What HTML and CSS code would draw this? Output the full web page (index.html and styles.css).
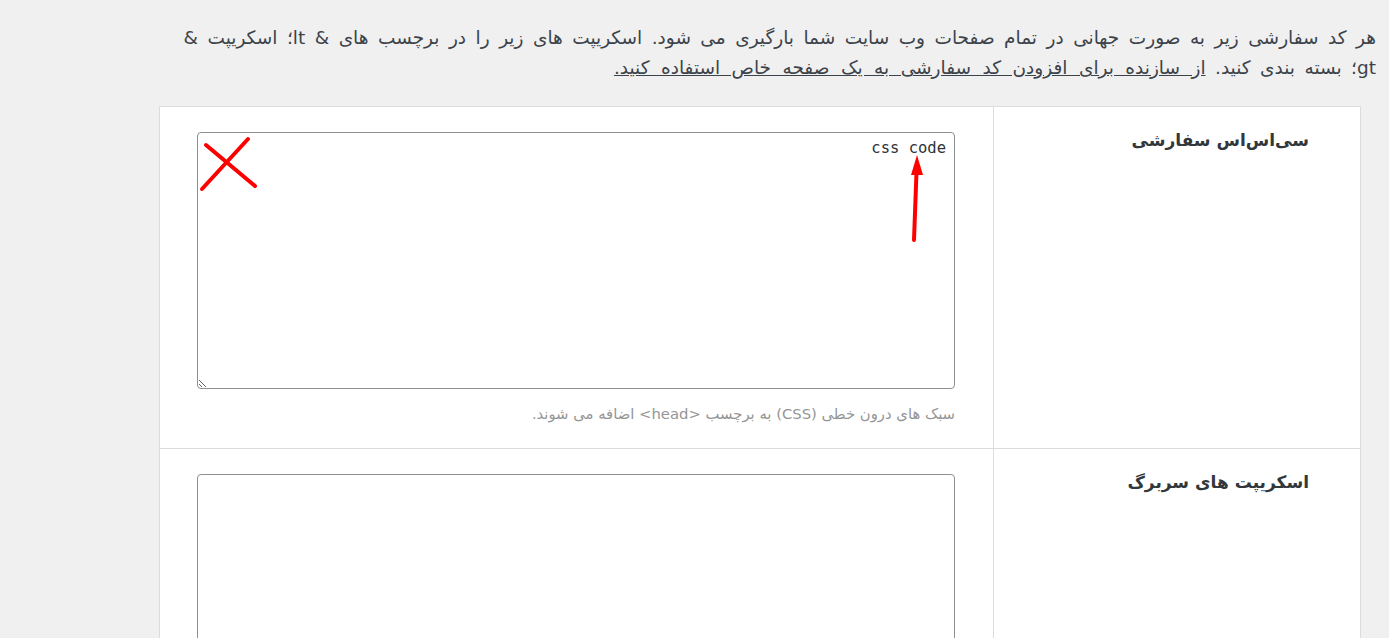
FILE: index.html
```html
<!DOCTYPE html>
<html lang="fa" dir="rtl">
<head>
  <meta charset="UTF-8">
  <meta name="viewport" content="width=device-width, initial-scale=1.0">
  <title>کدهای سفارشی</title>
  <link rel="stylesheet" href="styles.css">
</head>
<body>
  <main class="wrap">
    <p class="intro">
      هر کد سفارشی زیر به صورت جهانی در تمام صفحات وب سایت شما بارگیری می شود. اسکریپت های زیر را در برچسب های &amp; lt؛ اسکریپت &amp; gt؛ بسته بندی کنید.
      <a href="#">از سازنده برای افزودن کد سفارشی به یک صفحه خاص استفاده کنید.</a>
    </p>

    <div class="form-table">
      <!-- custom css -->
      <div class="row">
        <div class="row-label">
          <label for="custom-css">سی‌اس‌اس سفارشی</label>
        </div>
        <div class="row-field">
          <div class="code-box">
            <textarea id="custom-css" class="code">css code</textarea>
            <svg class="marks" width="758" height="257" viewBox="0 0 758 257">
              <line x1="9" y1="13" x2="58" y2="54" />
              <line x1="5" y1="57" x2="51" y2="7" />
              <line x1="717" y1="108" x2="719.5" y2="40" />
              <polygon points="720,23 714,43 726,43" />
            </svg>
          </div>
          <p class="description">سبک های درون خطی (CSS) به برچسب &lt;head&gt; اضافه می شوند.</p>
        </div>
      </div>

      <!-- header scripts -->
      <div class="row">
        <div class="row-label">
          <label for="header-scripts">اسکریپت های سربرگ</label>
        </div>
        <div class="row-field">
          <div class="code-box">
            <textarea id="header-scripts" class="code"></textarea>
          </div>
        </div>
      </div>
    </div>
  </main>
</body>
</html>
```

FILE: styles.css
```css
* {
  box-sizing: border-box;
}

body {
  margin: 0;
  background-color: #f0f0f0;
  color: #3c434a;
  font-family: "DejaVu Sans", Tahoma, sans-serif;
  font-size: 17.5px;
}

.wrap {
  padding: 23px 13px 0 28px;
}

/* Intro text */
.intro {
  margin: 0 0 23px 0;
  padding-left: 145px;
  font-size: 18.5px;
  line-height: 30px;
  word-spacing: 3.6px;
}

.intro a {
  color: #3c434a;
  text-decoration: underline;
  word-spacing: 5.6px;
}

/* Settings table */
.form-table {
  margin-right: 15px;
  margin-left: 131px;
  background-color: #fff;
  border: 1px solid #dcdcdc;
}

.row {
  display: flex;
  border-bottom: 1px solid #dcdcdc;
}

.row:last-child {
  border-bottom: none;
}

.row-label {
  width: 367px;
  flex-shrink: 0;
  padding: 23px 51px 0 20px;
  border-left: 1px solid #dcdcdc;
}

.row-label label {
  font-weight: bold;
  font-size: 17px;
  color: #32373c;
}

.row-field {
  flex: 1;
  padding: 25px 38px 25px 37px;
}

.code-box {
  position: relative;
}

.code {
  display: block;
  width: 100%;
  height: 257px;
  margin: 0;
  padding: 5px 8px;
  border: 1px solid #8c8f94;
  border-radius: 4px;
  background-color: #fff;
  color: #2c3338;
  font-family: "DejaVu Sans Mono", "Liberation Mono", monospace;
  font-size: 15.5px;
  line-height: 20px;
}

.row:last-child .code {
  height: 200px;
}

/* red annotation marks over the first box */
.marks {
  position: absolute;
  top: 0;
  left: 0;
  pointer-events: none;
}

.marks line {
  stroke: #ff0000;
  stroke-width: 4;
  stroke-linecap: round;
}

.marks polygon {
  fill: #ff0000;
}

.description {
  margin: 16px 0 0 0;
  font-size: 14.8px;
  line-height: 18px;
  color: #959595;
}
```
